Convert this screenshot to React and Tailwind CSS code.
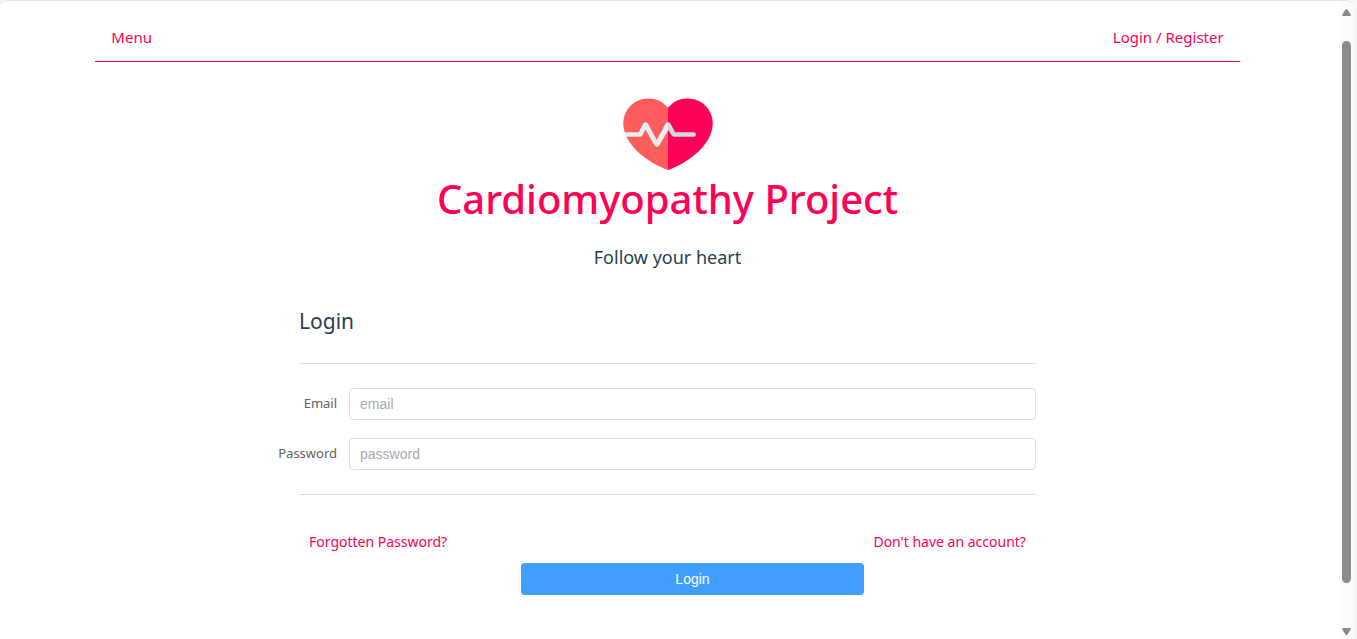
const links = "text-[#f05] hover:underline";

function HeartLogo() {
  return (
    <svg className="h-[73px] w-[90px]" viewBox="0 0 91 73" aria-hidden="true">
      <path d="M45.5 9.5C40.500 3 33.500 0 26 0C11 0 .3 11.300 .3 25.500C.3 48 27 66 45.500 72.500Z" fill="#ff5d5d" />
      <path d="M45.500 9.500C50.500 3 57.500 0 65 0C80 0 90.700 11.300 90.700 25.500C90.700 48 64 66 45.500 72.500Z" fill="#ff0058" />
      <path d="M3.500 38.700C2.700 37.200 2.200 35.700 1.700 34.300H15.900L20.500 25.500Q22.800 22.600 25.200 25.500L34.200 42L43 25.500Q44 24 45.500 24V32.600L36.400 48Q34.200 50.300 32 48L22.800 31.500L19.700 37.300Q19 38.700 17.500 38.700Z" fill="#e9edf0" />
      <path d="M45.500 24Q47 24 48 25.500L52.700 34.300H71.500A2.200 2.200 0 0 1 71.500 38.700H51.500Q50 38.700 49.200 37.300L45.500 31.500Z" fill="#c8dce5" />
    </svg>
  );
}

function Field({ id, label, type }) {
  return (
    <div className="flex items-center gap-3">
      <label htmlFor={id} className="flex w-[38px] shrink-0 justify-end text-[13px] text-[#606266]">
        {label}
      </label>
      <input
        id={id}
        type={type}
        placeholder={id}
        className="h-8 min-w-0 flex-1 rounded-[4px] border border-[#dcdfe6] bg-white px-2.5 font-['Liberation_Sans',sans-serif] text-sm text-[#606266] outline-none placeholder:text-[#a8abb2] focus:border-[#409eff]"
      />
    </div>
  );
}

function Scrollbar() {
  return (
    <div className="flex w-[15px] shrink-0 flex-col items-center bg-[#fcfcfc]" aria-hidden="true">
      <svg className="mt-2 h-2 w-[9px]" viewBox="0 0 9 8">
        <path d="M4.500 0Q5.200 0 5.800 1L8.700 5.500Q9.200 7 8 7H1Q-.2 7 .3 5.500L3.200 1Q3.800 0 4.500 0Z" fill="#8b8b8b" />
      </svg>
      <div className="mt-6 mb-11 w-[9px] flex-1 rounded-full bg-[#8b8b8b]" />
      <svg className="mb-1 h-2 w-[9px]" viewBox="0 0 9 8">
        <path d="M4.500 8Q5.200 8 5.800 7L8.700 2.500Q9.200 1 8 1H1Q-.2 1 .3 2.500L3.200 7Q3.800 8 4.500 8Z" fill="#8b8b8b" />
      </svg>
    </div>
  );
}

export default function App() {
  return (
    <div className="min-h-screen bg-[#f6f6f6] pr-[3px] font-['Noto_Sans',sans-serif] text-[#2c3e50]">
      <div className="flex min-h-screen overflow-hidden rounded-t-lg border-t border-[#e6e6e6] bg-white">
        <div className="min-w-0 flex-1 pr-1">
          <div className="mx-auto w-6/7">
            <nav className="flex h-[61px] items-center justify-between border-b border-[#f05] px-4 pt-3 text-[15px]">
              <a href="#menu" className={links}>Menu</a>
              <a href="#login" className={links}>Login / Register</a>
            </nav>
            <header className="flex flex-col items-center pt-9">
              <HeartLogo />
              <h1 className="text-[40px] leading-[56px] font-medium text-[#f05]">Cardiomyopathy Project</h1>
              <p className="mt-4 text-lg leading-7">Follow your heart</p>
            </header>
            <form className="mx-auto mt-8 w-[64.4%]" onSubmit={(e) => e.preventDefault()}>
              <h2 className="text-[21px] leading-9">Login</h2>
              <hr className="my-6 border-[#dcdfe6]" />
              <div className="flex flex-col gap-[18px]">
                <Field id="email" label="Email" type="email" />
                <Field id="password" label="Password" type="password" />
              </div>
              <hr className="my-6 border-[#dcdfe6]" />
              <div className="flex justify-between px-2.5 pt-3 text-sm leading-[22px]">
                <a href="#forgotten" className={links}>Forgotten Password?</a>
                <a href="#register" className={links}>Don't have an account?</a>
              </div>
              <div className="mt-2.5 flex justify-center pl-[50px]">
                <button type="submit" className="h-8 w-1/2 rounded-[4px] bg-[#409eff] font-['Liberation_Sans',sans-serif] text-sm text-white">
                  Login
                </button>
              </div>
            </form>
          </div>
        </div>
        <Scrollbar />
      </div>
    </div>
  );
}
